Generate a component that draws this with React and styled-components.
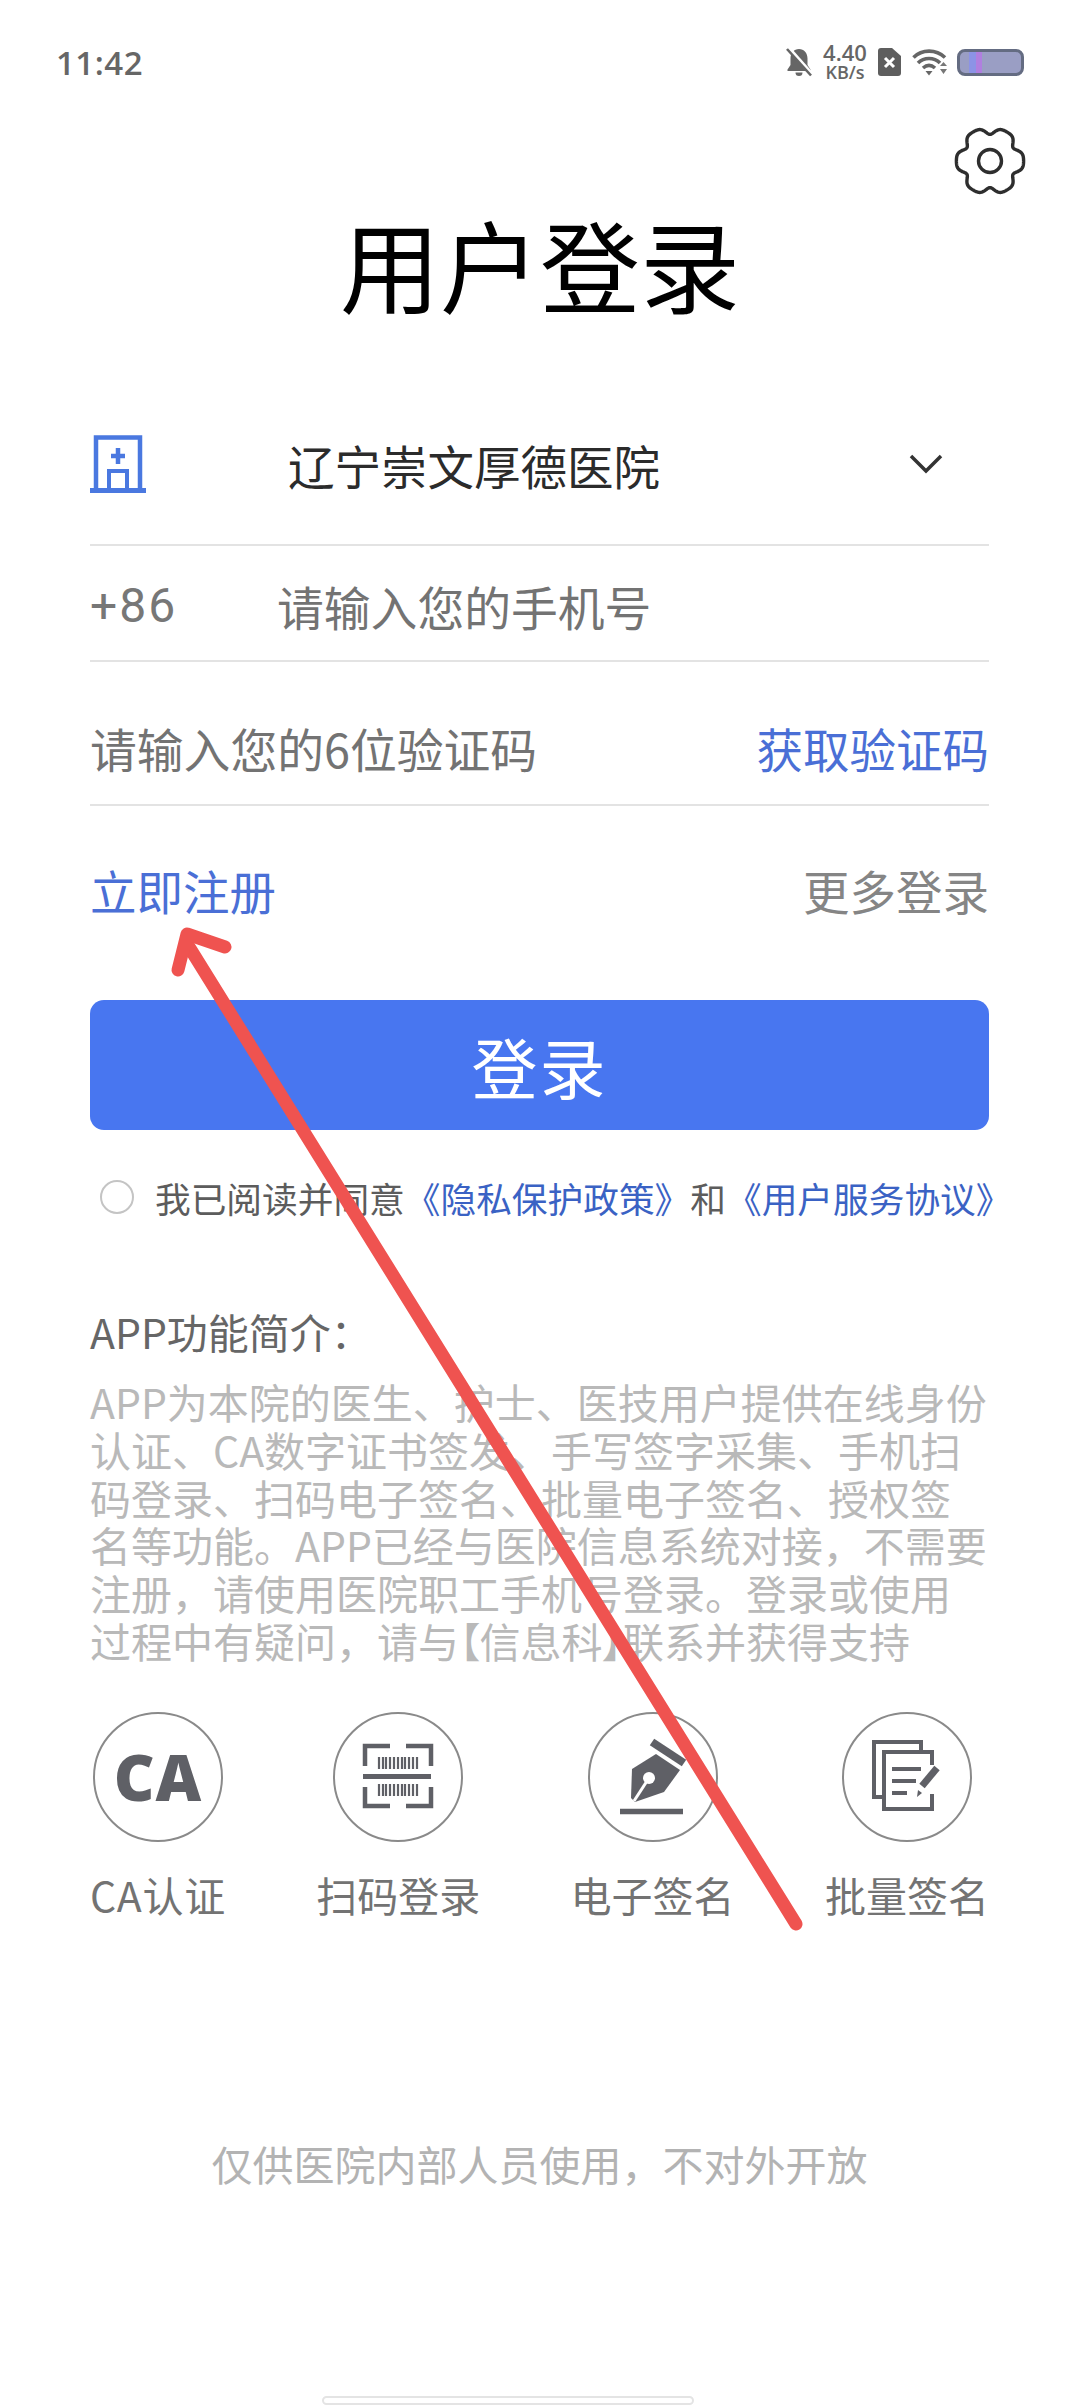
import React from 'react';
import styled, { createGlobalStyle } from 'styled-components';

const CJK = `"Noto Sans CJK SC", "Noto Sans", sans-serif`;

const GlobalStyle = createGlobalStyle`
  html, body {
    margin: 0;
    padding: 0;
    background: #fff;
  }
  body {
    font-family: ${CJK};
  }
`;

// outline of the settings gear: six flat lobes with scooped notches between
const gearPath = () => {
  const pts = [];
  for (let i = 0; i < 240; i++) {
    const a = (i / 240) * Math.PI * 2;
    const scoop = Math.pow((1 - Math.cos(6 * a)) / 2, 2.4);
    const r = 33.6 - 7 * scoop;
    pts.push(`${(36 + r * Math.cos(a)).toFixed(2)} ${(36 + r * Math.sin(a)).toFixed(2)}`);
  }
  return `M${pts.join('L')}Z`;
};

const introLines = [
  'APP为本院的医生、护士、医技用户提供在线身份',
  '认证、CA数字证书签发、手写签字采集、手机扫',
  '码登录、扫码电子签名、批量电子签名、授权签',
  '名等功能。APP已经与医院信息系统对接，不需要',
  '注册，请使用医院职工手机号登录。登录或使用',
];

const Page = styled.div`
  position: relative;
  width: 1080px;
  height: 2408px;
  overflow: hidden;
  background: #fff;
  display: flex;
  flex-direction: column;
`;

const StatusBar = styled.div`
  height: 110px;
  padding: 45px 56px 0 56px;
  box-sizing: border-box;
  display: flex;
  justify-content: space-between;
  align-items: flex-start;
`;

const Time = styled.div`
  font-family: "Open Sans", sans-serif;
  font-size: 33px;
  font-weight: 600;
  line-height: 36px;
  color: #666;
  letter-spacing: 0.5px;
`;

const StatusIcons = styled.div`
  display: flex;
  align-items: center;
  height: 36px;
  margin-top: -1px;
`;

const Speed = styled.div`
  width: 48px;
  margin: 0 9px 0 9px;
  text-align: center;
  font-family: "Open Sans", sans-serif;
  color: #666;
  font-weight: 600;
`;

const SpeedValue = styled.div`
  font-size: 22px;
  line-height: 21px;
`;

const SpeedUnit = styled.div`
  font-size: 18px;
  line-height: 19px;
`;

const Battery = styled.div`
  width: 67px;
  height: 27px;
  margin-left: 9px;
  box-sizing: border-box;
  border: 3px solid #646c82;
  border-radius: 8px;
  background: linear-gradient(
    90deg,
    #9a9ec4 0 14%,
    #8c93e6 14% 26%,
    #b07fdf 26% 36%,
    #9a9ec4 36% 100%
  );
`;

const SettingsRow = styled.div`
  height: 85px;
  padding: 15px 54px 0 0;
  box-sizing: border-box;
  display: flex;
  justify-content: flex-end;
`;

const Title = styled.h1`
  margin: 0;
  height: 136px;
  text-align: center;
  font-size: 100px;
  line-height: 136px;
  font-weight: 400;
  color: #000;
`;

const Form = styled.div`
  padding: 0 91px 0 90px;
  display: flex;
  flex-direction: column;
`;

const HospitalRow = styled.div`
  margin-top: 55px;
  height: 160px;
  box-sizing: border-box;
  padding-bottom: 2px;
  display: flex;
  align-items: center;
  border-bottom: 2px solid #e3e3e3;
`;

const HospitalName = styled.div`
  margin-left: 142px;
  flex: 1;
  font-size: 46.5px;
  color: #2b2b2b;
`;

const Chevron = styled.svg`
  margin-right: 46px;
`;

const PhoneRow = styled.div`
  height: 116px;
  box-sizing: border-box;
  padding-top: 4px;
  display: flex;
  align-items: center;
  border-bottom: 2px solid #e3e3e3;
`;

const CountryCode = styled.span`
  width: 187px;
  font-family: "Roboto", sans-serif;
  font-size: 48px;
  letter-spacing: 2px;
  color: #777;
`;

const Placeholder = styled.span`
  font-size: 46.8px;
  color: #737373;
`;

const CodeRow = styled.div`
  height: 144px;
  box-sizing: border-box;
  padding-top: 28px;
  display: flex;
  align-items: center;
  justify-content: space-between;
  border-bottom: 2px solid #e3e3e3;
`;

const LinkText = styled.span`
  font-size: 46.5px;
  color: #4a6fd6;
`;

const MoreRow = styled.div`
  height: 150px;
  box-sizing: border-box;
  padding: 16px 0 0;
  display: flex;
  align-items: center;
  justify-content: space-between;
`;

const MoreLogin = styled.span`
  font-size: 46.5px;
  color: #858585;
`;

const LoginButton = styled.button`
  margin-top: 44px;
  height: 130px;
  width: 100%;
  padding: 0;
  border: 0;
  border-radius: 14px;
  background: #4876f0;
  color: #fff;
  font-family: ${CJK};
  font-size: 66px;
  letter-spacing: 2px;
`;

const AgreementRow = styled.div`
  margin-top: 43px;
  height: 48px;
  display: flex;
  align-items: center;
  white-space: nowrap;
  font-size: 35.7px;
  color: #5c5c5c;
`;

const Radio = styled.span`
  width: 34px;
  height: 34px;
  margin: 0 21px 0 10px;
  box-sizing: border-box;
  border: 2px solid #c4c4c4;
  border-radius: 50%;
  flex-shrink: 0;
`;

const PolicyLink = styled.span`
  color: #3a62c4;
`;

const IntroTitle = styled.div`
  margin-top: 86px;
  font-size: 41px;
  line-height: 48px;
  color: #666;
`;

const IntroText = styled.div`
  margin-top: 23px;
  font-size: 41px;
  line-height: 47.8px;
  color: #b9b9b9;
  white-space: nowrap;
`;

// the reference sets these punctuation marks half width
const Tight = styled.span`
  font-feature-settings: "palt";
`;

const Features = styled.div`
  margin-top: 47px;
  display: flex;
  justify-content: space-between;
`;

const Feature = styled.div`
  display: flex;
  flex-direction: column;
  align-items: center;
`;

const IconCircle = styled.div`
  width: 130px;
  height: 130px;
  box-sizing: border-box;
  border: 2px solid #8a8a8a;
  border-radius: 50%;
  display: flex;
  align-items: center;
  justify-content: center;
  font-family: "Open Sans", sans-serif;
  font-size: 63px;
  font-weight: 800;
  letter-spacing: 1px;
  color: #5f6066;
`;

const FeatureLabel = styled.div`
  margin-top: 25px;
  font-size: 41px;
  line-height: 54px;
  letter-spacing: ${(p) => p.$spacing || 0}px;
  color: #737373;
  white-space: nowrap;
`;

const Footer = styled.div`
  margin-top: 214px;
  text-align: center;
  font-size: 41px;
  line-height: 56px;
  color: #b3b3b3;
`;

const HomeIndicator = styled.div`
  position: absolute;
  left: 322px;
  bottom: 3px;
  width: 372px;
  height: 9px;
  box-sizing: border-box;
  border: 2px solid #e4e4e4;
  border-radius: 5px;
`;

// red annotation arrow drawn over the page
const ArrowOverlay = styled.svg`
  position: absolute;
  left: 0;
  top: 0;
  pointer-events: none;
`;

const BellOff = () => (
  <svg width="26" height="30" viewBox="0 0 26 30">
    <path d="M13 2c-5 0-8.500 4-8.500 9.500V18L1.500 22.500V24h23v-1.500L21.500 18v-6.500C21.500 6 18 2 13 2z" fill="#666" />
    <path d="M9.500 25.500h7a3.500 3.500 0 0 1-7 0z" fill="#666" />
    <path d="M3 1.500l23 26" stroke="#fff" strokeWidth="4" />
    <path d="M1 2l24 26.500" stroke="#666" strokeWidth="2.600" />
  </svg>
);

const SimX = () => (
  <svg width="23" height="28" viewBox="0 0 23 28">
    <path d="M3 0h11l9 8v17a3 3 0 0 1-3 3H3a3 3 0 0 1-3-3V3a3 3 0 0 1 3-3z" fill="#5e5e5e" />
    <path d="M7 10l9 9M16 10l-9 9" stroke="#fff" strokeWidth="3" />
  </svg>
);

const WifiIcon = styled.svg`
  margin-left: 11px;
`;

const Wifi = () => (
  <WifiIcon width="36" height="28" viewBox="0 0 36 28">
    <g fill="none" stroke="#666" strokeWidth="3.6">
      <path d="M1.500 9.500C10 1 24 1 33 9.500" />
      <path d="M6 15c6-6 16-6 22 0" />
      <path d="M11 20c4-3.500 8-3.500 12 0" />
    </g>
    <path d="M13.500 23h7L17 27.500z" fill="#666" />
    <path d="M28 18h7l-3.500-4zM28 21h7l-3.500 5z" fill="#777" />
  </WifiIcon>
);

const Gear = () => (
  <svg width="72" height="72" viewBox="0 0 72 72">
    <path d={gearPath()} fill="none" stroke="#2e2e2e" strokeWidth="3.4" strokeLinejoin="round" />
    <circle cx="36" cy="36" r="11.500" fill="none" stroke="#2e2e2e" strokeWidth="3.4" />
  </svg>
);

const HospitalIcon = () => (
  <svg width="56" height="58" viewBox="0 0 56 58">
    <path d="M6 56V2.500h44V56" fill="none" stroke="#4a78e0" strokeWidth="4.500" />
    <path d="M0 55.500h56" stroke="#4a78e0" strokeWidth="5" />
    <path d="M28 13v16M21 21h14" stroke="#4a78e0" strokeWidth="4.500" />
    <path d="M19 55V36h18v19" fill="none" stroke="#4a78e0" strokeWidth="4" />
  </svg>
);

const ScanIcon = () => (
  <svg width="126" height="126" viewBox="2 2 126 126">
    <g fill="none" stroke="#5f6066" strokeWidth="4.500">
      <path d="M32 54V34h25M98 54V34H73M32 75v19h25M98 75v19H73" />
    </g>
    <path d="M30 64.500h68" stroke="#5f6066" strokeWidth="5" />
    <path
      d="M46 45v12M50 45v12M53 45v12M57 45v12M61 45v12M65 45v12M69 45v12M72 45v12M76 45v12M80 45v12M84 45v12M46 72v12M50 72v12M53 72v12M57 72v12M61 72v12M65 72v12M69 72v12M72 72v12M76 72v12M80 72v12M84 72v12"
      stroke="#5f6066"
      strokeWidth="2.200"
    />
  </svg>
);

const PenIcon = () => (
  <svg width="126" height="126" viewBox="2 2 126 126">
    <path d="M32 99.500h63" stroke="#5f6066" strokeWidth="5.500" />
    <path d="M64 30l32 21" stroke="#5f6066" strokeWidth="8" />
    <path d="M44 57l24-15 24 16-16 22-29 10-4-4z" fill="#5f6066" />
    <path d="M61 66L46 89" stroke="#fff" strokeWidth="3" />
    <circle cx="61" cy="66" r="6" fill="#fff" />
  </svg>
);

const BatchIcon = () => (
  <svg width="126" height="126" viewBox="2 2 126 126">
    <g fill="none" stroke="#5f6066" strokeWidth="4">
      <path d="M42 85H32V30h47v10" />
      <path d="M90 53V40H42v57h48V82" />
    </g>
    <path d="M50 57h29M50 69h24M50 81h15" stroke="#5f6066" strokeWidth="4" />
    <path d="M95 56L80 74" stroke="#5f6066" strokeWidth="7" />
    <path d="M76 78l4 3-5 4z" fill="#5f6066" />
  </svg>
);

export default function App() {
  return (
    <>
      <GlobalStyle />
      <Page>
        <StatusBar>
          <Time>11:42</Time>
          <StatusIcons>
            <BellOff />
            <Speed>
              <SpeedValue>4.40</SpeedValue>
              <SpeedUnit>KB/s</SpeedUnit>
            </Speed>
            <SimX />
            <Wifi />
            <Battery />
          </StatusIcons>
        </StatusBar>

        <SettingsRow>
          <Gear />
        </SettingsRow>

        <Title>用户登录</Title>

        <Form>
          <HospitalRow>
            <HospitalIcon />
            <HospitalName>辽宁崇文厚德医院</HospitalName>
            <Chevron width="34" height="20" viewBox="0 0 34 20">
              <path d="M2 2l15 15L32 2" fill="none" stroke="#333" strokeWidth="3.500" />
            </Chevron>
          </HospitalRow>

          <PhoneRow>
            <CountryCode>+86</CountryCode>
            <Placeholder>请输入您的手机号</Placeholder>
          </PhoneRow>

          <CodeRow>
            <Placeholder>请输入您的6位验证码</Placeholder>
            <LinkText>获取验证码</LinkText>
          </CodeRow>

          <MoreRow>
            <LinkText>立即注册</LinkText>
            <MoreLogin>更多登录</MoreLogin>
          </MoreRow>

          <LoginButton>登录</LoginButton>

          <AgreementRow>
            <Radio />
            我已阅读并同意
            <PolicyLink>《隐私保护政策》</PolicyLink>和
            <PolicyLink>《用户服务协议》</PolicyLink>
          </AgreementRow>

          <IntroTitle>APP功能简介：</IntroTitle>
          <IntroText>
            {introLines.map((line) => (
              <div key={line}>{line}</div>
            ))}
            <div>
              过程中有疑问，请与<Tight>【</Tight>信息科<Tight>】</Tight>联系并获得支持
            </div>
          </IntroText>

          <Features>
            <Feature>
              <IconCircle>CA</IconCircle>
              <FeatureLabel $spacing={0.7}>CA认证</FeatureLabel>
            </Feature>
            <Feature>
              <IconCircle>
                <ScanIcon />
              </IconCircle>
              <FeatureLabel>扫码登录</FeatureLabel>
            </Feature>
            <Feature>
              <IconCircle>
                <PenIcon />
              </IconCircle>
              <FeatureLabel>电子签名</FeatureLabel>
            </Feature>
            <Feature>
              <IconCircle>
                <BatchIcon />
              </IconCircle>
              <FeatureLabel>批量签名</FeatureLabel>
            </Feature>
          </Features>

          <Footer>仅供医院内部人员使用，不对外开放</Footer>
        </Form>

        <HomeIndicator />

        <ArrowOverlay width="1080" height="2408" viewBox="0 0 1080 2408">
          <g fill="none" stroke="#ef5350" strokeWidth="13" strokeLinecap="round" strokeLinejoin="round">
            <path d="M796 1924L186 942" />
            <path d="M178 970L187 934L225 947" />
          </g>
        </ArrowOverlay>
      </Page>
    </>
  );
}
